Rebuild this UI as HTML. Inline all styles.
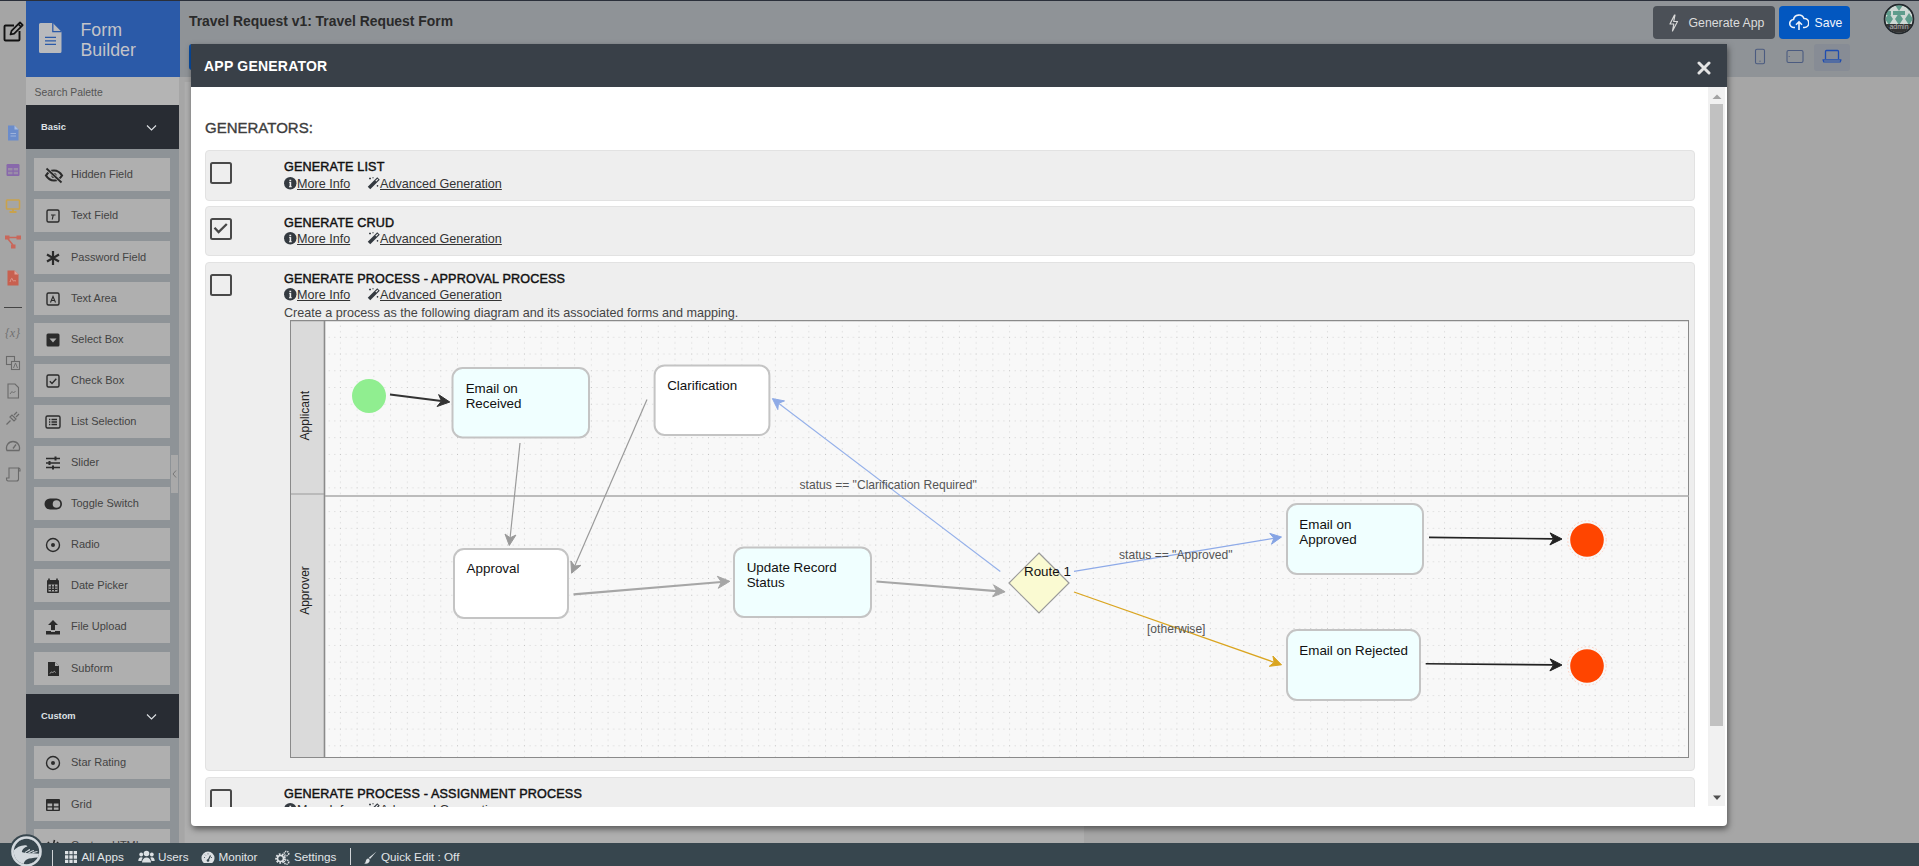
<!DOCTYPE html>
<html><head><meta charset="utf-8">
<style>
*{box-sizing:border-box;margin:0;padding:0}
html,body{width:1919px;height:866px;overflow:hidden;background:#a6a6a6;font-family:"Liberation Sans",sans-serif;position:relative}
.abs{position:absolute}
#topline{left:0;top:0;width:1919px;height:1px;background:#2a2f3a}
#iconbar{left:0;top:1px;width:26px;height:842px;background:#a5a5a5}
#brand{left:26px;top:1px;width:154px;height:76px;background:#2b5aa8}
#hdr{left:180px;top:1px;width:1739px;height:76px;background:#8f9397}
#search{left:26px;top:77px;width:153px;height:28px;background:#b4b4b4;color:#555;font-size:10.4px;padding:10px 0 0 8.5px}
#palette{left:26px;top:105px;width:153px;height:738px;background:#8e9397;overflow:hidden}
.cat{position:absolute;left:0;width:153px;height:44px;background:#282c33;color:#dfe2e6;font-size:9.3px;font-weight:bold;padding:17px 0 0 15px}
.item{position:absolute;left:8px;width:136px;height:33px;background:#afafaf;color:#434343;font-size:11px}
.item span{position:absolute;left:37px;top:10px}
.item svg{position:absolute;left:10px;top:8px}
#bottombar{left:0;top:843px;width:1919px;height:23px;background:#37464e;color:#e0e3e5;font-size:12px}
#modal{left:191px;top:44px;width:1536px;height:782px;background:#fff;border-radius:0 0 4px 4px;box-shadow:1px 3px 6px rgba(0,0,0,.5)}
#mhead{left:0;top:0;width:1536px;height:43px;background:#394048;color:#fff;font-weight:bold;font-size:14px}

#scroll{left:191px;top:87px;width:1517px;height:720px;overflow:hidden}
#inner{left:-191px;top:-87px;width:1919px;height:900px}
.t{position:absolute;white-space:nowrap;line-height:1}
.gbox{position:absolute;left:205px;width:1490px;background:#eeeeee;border:1px solid #e2e2e2;border-radius:4px}
.cb{position:absolute;left:4px;top:10.7px;width:22px;height:22px;border:2.4px solid #494949;border-radius:2.5px}
.gt{position:absolute;left:78px;top:10px;font-size:12.6px;font-weight:normal;-webkit-text-stroke:0.45px #111;color:#111;letter-spacing:0.16px;white-space:nowrap;line-height:1}
.gl{position:absolute;left:78px;top:27px;font-size:12.6px;color:#333;white-space:nowrap;line-height:1}
.gl u{text-decoration:underline}
#sbtrack{left:1708px;top:87px;width:17px;height:719px;background:#f1f1f1}
#sbthumb{left:1710px;top:104px;width:13px;height:622px;background:#c1c1c1}

.nt{font-family:"Liberation Sans",sans-serif;font-size:13.4px;fill:#111}
.el{font-family:"Liberation Sans",sans-serif;font-size:12.1px;fill:#555}
.lt{font-family:"Liberation Sans",sans-serif;font-size:12px;fill:#222}
.bt{position:absolute;top:8px;font-size:11.7px;line-height:1;color:#e2e5e8;white-space:nowrap}
#bottombar{overflow:visible}
</style></head>
<body>
<div id="topline" class="abs"></div>
<div id="iconbar" class="abs"></div>
<div id="brand" class="abs"></div>
<div id="hdr" class="abs"></div>

<svg class="abs" style="left:2px;top:21px" width="22" height="22" viewBox="0 0 22 22"><path d="M12 4.5H3.5a1 1 0 0 0-1 1v13a1 1 0 0 0 1 1h13a1 1 0 0 0 1-1V10" fill="none" stroke="#111" stroke-width="1.9"/><path d="M8.5 13.5l1-3.6L18 1.4l2.7 2.7-8.5 8.5z" fill="none" stroke="#111" stroke-width="1.7" stroke-linejoin="round"/><path d="M16.3 3.1l2.7 2.7" stroke="#111" stroke-width="1.5"/></svg>
<svg class="abs" style="left:38px;top:22px" width="25" height="32" viewBox="0 0 25 32"><path d="M2.5 1h12.3L23.5 9.7V29.5a1.5 1.5 0 0 1-1.5 1.5H2.5A1.5 1.5 0 0 1 1 29.5V2.5A1.5 1.5 0 0 1 2.5 1z" fill="#b9babd"/><path d="M14.8 1V9.7H23.5" fill="none" stroke="#2b5aa8" stroke-width="1.3"/><path d="M7 15.4h11M7 18.8h11M7 22.3h11" stroke="#2b5aa8" stroke-width="1.2"/></svg>
<div class="t" style="left:80.5px;top:19.5px;font-size:17.8px;color:#c3c4c9;line-height:20.6px">Form<br>Builder</div>
<div class="t" style="left:189px;top:15px;font-size:13.9px;font-weight:bold;color:#2a2a2a">Travel Request v1: Travel Request Form</div>
<div class="abs" style="left:189px;top:44px;width:10px;height:26px;background:#0a4fa8;border-radius:3px"></div>
<div class="abs" style="left:1653px;top:6px;width:122px;height:33px;background:#4b5057;border-radius:4px;color:#dcdcdc;font-size:13.3px">
 <svg style="position:absolute;left:15px;top:8px" width="11" height="18" viewBox="0 0 11 18"><path d="M6.5 1L2 10h3.8L4.5 17L9.5 7.5H5.7L7 1z" fill="none" stroke="#d8d8d8" stroke-width="1.2" stroke-linejoin="round"/></svg>
 <span style="position:absolute;left:35.5px;top:11px;line-height:1;font-size:12.3px">Generate App</span></div>
<div class="abs" style="left:1779px;top:6px;width:71px;height:33px;background:#0257c0;border-radius:4px;color:#f2f5fa;font-size:13.3px">
 <svg style="position:absolute;left:10px;top:8px" width="20" height="17" viewBox="0 0 20 17"><path d="M6 13.5H5A4 4 0 0 1 4.5 5.5A5.5 5.5 0 0 1 15 4.5A4.5 4.5 0 0 1 15.5 13.5H14" fill="none" stroke="#eef2f8" stroke-width="1.6"/><path d="M10 16V8M7 10.8L10 7.8L13 10.8" fill="none" stroke="#eef2f8" stroke-width="1.6"/></svg>
 <span style="position:absolute;left:35.5px;top:11px;line-height:1;font-size:12.2px">Save</span></div>
<div class="abs" style="left:1814px;top:44px;width:36px;height:27px;background:#878c95;border-radius:3px"></div>
<svg class="abs" style="left:1754px;top:48px" width="12" height="17" viewBox="0 0 12 17"><rect x="1.5" y="1.2" width="9" height="14.5" rx="1.5" fill="none" stroke="#4b5b80" stroke-width="1.1"/><circle cx="6" cy="13.2" r="0.6" fill="#4b5b80"/></svg>
<svg class="abs" style="left:1786px;top:49px" width="19" height="15" viewBox="0 0 19 15"><rect x="1" y="1.5" width="16" height="12" rx="1.5" fill="none" stroke="#4b5b80" stroke-width="1.1"/><circle cx="3.2" cy="7.5" r="0.6" fill="#4b5b80"/></svg>
<svg class="abs" style="left:1822px;top:49px" width="20" height="15" viewBox="0 0 20 15"><path d="M3.5 10V2.5a1 1 0 0 1 1-1h11a1 1 0 0 1 1 1V10" fill="none" stroke="#1f4db0" stroke-width="1.3"/><path d="M1 10.8h18l-0.8 2.2H1.8z" fill="none" stroke="#1f4db0" stroke-width="1.2" stroke-linejoin="round"/></svg>
<svg class="abs" style="left:1883px;top:3px" width="32" height="32" viewBox="0 0 32 32"><defs><clipPath id="av"><circle cx="16" cy="16" r="13.8"/></clipPath></defs><circle cx="16" cy="16" r="15" fill="#2a2f33"/><g clip-path="url(#av)"><rect x="0" y="0" width="32" height="32" fill="#cfd8d4"/><path d="M2 2h8l-4 6zM12 2h8l-4 6zM22 2h8l-4 6zM6 10l4 6l-4 6l-4-6zM16 10l4 6l-4 6l-4-6zM26 10l4 6l-4 6l-4-6zM2 8h6v4H2zM10 8h12v4H10z" fill="#5f9c8c"/><rect x="0" y="21" width="32" height="11" fill="#333"/></g><text x="16" y="26" font-size="7" fill="#bbb" text-anchor="middle" font-family="Liberation Sans">admin</text><circle cx="16" cy="16" r="14.5" fill="none" stroke="#23282c" stroke-width="1.6"/></svg>

<svg class="abs" style="left:5px;top:125px" width="16" height="16" viewBox="0 0 16 16"><path d="M3 0.5h6.5L13.5 4.5V15.5H3z" fill="#6b8ccb"/><path d="M9.5 0.5v4h4" fill="#a9bde0"/><path d="M5.5 8.5h5.5M5.5 11h5.5" stroke="#9eb3dc" stroke-width="1"/></svg>
<svg class="abs" style="left:5px;top:163px" width="16" height="14" viewBox="0 0 16 14"><rect x="1.5" y="1" width="13" height="12" rx="1.2" fill="#8868ab"/><path d="M3 5h4.5v2.5H3zM8.7 5h4.3v2.5H8.7zM3 8.8h4.5v2.5H3zM8.7 8.8h4.3v2.5H8.7z" fill="#a6a6a6" opacity=".6"/></svg>
<svg class="abs" style="left:5px;top:198px" width="16" height="16" viewBox="0 0 16 16"><rect x="1.5" y="2" width="13" height="9" rx="0.8" fill="none" stroke="#c9a24c" stroke-width="1.6"/><path d="M8 11v2.5M4.5 14h7" stroke="#c9a24c" stroke-width="1.8"/></svg>
<svg class="abs" style="left:4px;top:234px" width="18" height="16" viewBox="0 0 18 16"><rect x="1" y="1.5" width="4.5" height="4" fill="#c9675a"/><rect x="12.5" y="1.5" width="4.5" height="4" fill="#c9675a"/><rect x="7" y="10.5" width="4.5" height="4" fill="#c9675a"/><path d="M5 3.5h8M4 5l5 6" stroke="#c9675a" stroke-width="1.5"/></svg>
<svg class="abs" style="left:5px;top:270px" width="16" height="16" viewBox="0 0 16 16"><path d="M2.5 0.5h7L13.5 4.5V15.5H2.5z" fill="#c8604f"/><path d="M9.5 0.5v4h4" fill="#e0a49a"/><path d="M5 12c1-3 2-5 2.5-2.5S9 10 11 11" stroke="#e0a49a" stroke-width="0.9" fill="none"/></svg>
<div class="abs" style="left:4px;top:307px;width:18px;height:1.2px;background:#444"></div>
<div class="t" style="left:5px;top:327px;font-size:12px;font-style:italic;color:#707070;font-family:'Liberation Serif',serif">{x}</div>
<svg class="abs" style="left:5px;top:355px" width="16" height="16" viewBox="0 0 16 16"><rect x="1.5" y="1.5" width="8" height="8" fill="none" stroke="#6a6a6a" stroke-width="1.1"/><rect x="6.5" y="6.5" width="8" height="8" fill="#a6a6a6" stroke="#6a6a6a" stroke-width="1.1"/><path d="M8.5 13l2-5l2 5" stroke="#6a6a6a" stroke-width="0.9" fill="none"/></svg>
<svg class="abs" style="left:5px;top:383px" width="16" height="16" viewBox="0 0 16 16"><path d="M3 1h7l3.5 3.5V15H3z" fill="none" stroke="#6a6a6a" stroke-width="1.1"/><path d="M5 11l2-2.5l1.5 1.5l2-2" stroke="#6a6a6a" stroke-width="0.9" fill="none"/></svg>
<svg class="abs" style="left:5px;top:410px" width="16" height="16" viewBox="0 0 16 16"><path d="M1.5 14.5l4-4M5 7l4 4l2-2l-4-4zM9 5l3-3M11 7l3-3" stroke="#6a6a6a" stroke-width="1.2" fill="none"/></svg>
<svg class="abs" style="left:5px;top:438px" width="16" height="16" viewBox="0 0 16 16"><path d="M2 12.5a6.5 6.5 0 1 1 12 0z" fill="none" stroke="#6a6a6a" stroke-width="1.3"/><path d="M8 10.5l3-4" stroke="#6a6a6a" stroke-width="1.3"/></svg>
<svg class="abs" style="left:5px;top:466px" width="16" height="16" viewBox="0 0 16 16"><path d="M4 2h9.5v11a2 2 0 0 1-2 2H3a2 2 0 0 1-1.5-2V12H4z" fill="none" stroke="#6a6a6a" stroke-width="1.1"/><path d="M13.5 2a1.5 1.5 0 0 1 1.5 1.5V5h-1.5" fill="none" stroke="#6a6a6a" stroke-width="1.1"/></svg>
<div class="abs" style="left:179px;top:77px;width:5px;height:766px;background:#a6a6a6"></div>
<div class="abs" style="left:184px;top:82px;width:900px;height:761px;background:#afafaf;border-left:1px solid #a9a9a9"></div>
<div id="search" class="abs">Search Palette</div>
<div id="palette" class="abs"><div class="cat" style="top:0px">Basic<svg style="position:absolute;left:120px;top:19px" width="11" height="8" viewBox="0 0 11 8"><path d="M1 1.5L5.5 6L10 1.5" stroke="#dfe2e6" stroke-width="1.1" fill="none"/></svg></div>
<div class="item" style="top:53.3px"><svg width="20" height="18" viewBox="0 0 20 18"><path d="M2 9.5C4.5 5.5 7 4.5 10 4.5S15.5 5.5 18 9.5C15.5 13.5 13 14.5 10 14.5S4.5 13.5 2 9.5Z" fill="none" stroke="#2b2b2b" stroke-width="2.2"/><circle cx="10" cy="9.5" r="2.6" fill="#2b2b2b"/><path d="M2.5 2.5L17.5 16.5" stroke="#afafaf" stroke-width="3.5"/><path d="M2.5 2.5L17.5 16.5" stroke="#2b2b2b" stroke-width="1.8"/></svg><span>Hidden Field</span></div>
<div class="item" style="top:94.4px"><svg width="18" height="18" viewBox="0 0 18 18"><rect x="3" y="3" width="12" height="12" rx="1.5" fill="none" stroke="#2b2b2b" stroke-width="1.4"/><path d="M7 8h4.5M9.2 8l-0.9 4.5" stroke="#2b2b2b" stroke-width="1.2"/></svg><span>Text Field</span></div>
<div class="item" style="top:135.5px"><svg width="18" height="18" viewBox="0 0 18 18"><path d="M9 2v14M3 5.5l12 7M15 5.5l-12 7" stroke="#2b2b2b" stroke-width="2.2"/></svg><span>Password Field</span></div>
<div class="item" style="top:176.6px"><svg width="18" height="18" viewBox="0 0 18 18"><rect x="3" y="3" width="12" height="12" rx="1.5" fill="none" stroke="#2b2b2b" stroke-width="1.4"/><path d="M6.5 12.5L9 6.5L11.5 12.5M7.5 10.5h3" stroke="#2b2b2b" stroke-width="1.1" fill="none"/></svg><span>Text Area</span></div>
<div class="item" style="top:217.7px"><svg width="18" height="18" viewBox="0 0 18 18"><rect x="2.5" y="2.5" width="13" height="13" rx="1.5" fill="#2b2b2b"/><path d="M5.5 7.5h7L9 11.5Z" fill="#afafaf"/></svg><span>Select Box</span></div>
<div class="item" style="top:258.8px"><svg width="18" height="18" viewBox="0 0 18 18"><rect x="3" y="3" width="12" height="12" rx="1.5" fill="none" stroke="#2b2b2b" stroke-width="1.4"/><path d="M5.8 9.2l2.2 2.3l4.3-4.8" stroke="#2b2b2b" stroke-width="1.4" fill="none"/></svg><span>Check Box</span></div>
<div class="item" style="top:299.9px"><svg width="18" height="18" viewBox="0 0 18 18"><rect x="2" y="3" width="14" height="12" rx="1.5" fill="none" stroke="#2b2b2b" stroke-width="1.4"/><path d="M5 6.5h1.3M5 9h1.3M5 11.5h1.3M7.5 6.5h5.5M7.5 9h5.5M7.5 11.5h5.5" stroke="#2b2b2b" stroke-width="1.3"/></svg><span>List Selection</span></div>
<div class="item" style="top:341.0px"><svg width="18" height="18" viewBox="0 0 18 18"><path d="M2 4.5h14M2 9h14M2 13.5h14" stroke="#2b2b2b" stroke-width="1.6"/><path d="M11.5 2.5v4M5.5 7v4M9 11.5v4" stroke="#2b2b2b" stroke-width="2"/></svg><span>Slider</span></div>
<div class="item" style="top:382.1px"><svg width="20" height="18" viewBox="0 0 20 18"><rect x="0.5" y="3.5" width="17.5" height="11" rx="5.5" fill="#2b2b2b"/><circle cx="12.5" cy="9" r="3.8" fill="#afafaf"/></svg><span>Toggle Switch</span></div>
<div class="item" style="top:423.2px"><svg width="18" height="18" viewBox="0 0 18 18"><circle cx="9" cy="9" r="6.5" fill="none" stroke="#2b2b2b" stroke-width="1.4"/><circle cx="9" cy="9" r="2" fill="#2b2b2b"/></svg><span>Radio</span></div>
<div class="item" style="top:464.3px"><svg width="18" height="18" viewBox="0 0 18 18"><path d="M5 1.5v3M13 1.5v3" stroke="#2b2b2b" stroke-width="1.6"/><rect x="3" y="3" width="12" height="13" rx="1" fill="#2b2b2b"/><path d="M4.5 7.5h9v7h-9z" fill="#afafaf"/><path d="M4.5 10h9M4.5 12.4h9M7.5 7.5v7M10.5 7.5v7" stroke="#2b2b2b" stroke-width="1.1"/></svg><span>Date Picker</span></div>
<div class="item" style="top:505.4px"><svg width="18" height="18" viewBox="0 0 18 18"><path d="M9 2L4 7h3v5h4V7h3Z" fill="#2b2b2b"/><path d="M2 13h5v1h4v-1h5v3.5H2z" fill="#2b2b2b"/></svg><span>File Upload</span></div>
<div class="item" style="top:546.5px"><svg width="18" height="18" viewBox="0 0 18 18"><path d="M4 2h7l4 4v10H4z" fill="#2b2b2b"/><path d="M6 13.5c1.5-3 2.5 0 3.5-1.5s1.5 0 2 0.5" stroke="#afafaf" stroke-width="1" fill="none"/><path d="M11 2v4h4" fill="#afafaf"/></svg><span>Subform</span></div>
<div class="cat" style="top:589px">Custom<svg style="position:absolute;left:120px;top:19px" width="11" height="8" viewBox="0 0 11 8"><path d="M1 1.5L5.5 6L10 1.5" stroke="#dfe2e6" stroke-width="1.1" fill="none"/></svg></div>
<div class="item" style="top:641.4px"><svg width="18" height="18" viewBox="0 0 18 18"><circle cx="9" cy="9" r="6.5" fill="none" stroke="#2b2b2b" stroke-width="1.4"/><circle cx="9" cy="9" r="2" fill="#2b2b2b"/></svg><span>Star Rating</span></div>
<div class="item" style="top:682.5px"><svg width="18" height="18" viewBox="0 0 18 18"><rect x="2" y="3" width="14" height="12" rx="1" fill="#2b2b2b"/><path d="M3.5 7.5h4.7v2.7H3.5zM9.8 7.5h4.7v2.7H9.8zM3.5 11.5h4.7v2.2H3.5zM9.8 11.5h4.7v2.2H9.8z" fill="#afafaf"/></svg><span>Grid</span></div>
<div class="item" style="top:723.6px"><svg width="18" height="18" viewBox="0 0 18 18"><path d="M5 5L1.5 9L5 13M13 5l3.5 4L13 13M10.5 3l-3 12" stroke="#2b2b2b" stroke-width="1.6" fill="none"/></svg><span>Custom HTML</span></div>
<div style="position:absolute;left:145px;top:350px;width:7px;height:38px;background:#a9a9a9"><svg style="position:absolute;left:0;top:14px" width="7" height="10" viewBox="0 0 7 10"><path d="M5 1.5L2 5L5 8.5" stroke="#777" stroke-width="1" fill="none"/></svg></div></div>

<div id="bottombar" class="abs">
 <svg class="abs" style="left:9px;top:-9px" width="35" height="35" viewBox="0 0 35 35"><defs><clipPath id="lg"><circle cx="17.5" cy="17.5" r="12.8"/></clipPath></defs><circle cx="17.5" cy="17.5" r="17.3" fill="#37464e"/><g clip-path="url(#lg)"><rect x="0" y="0" width="35" height="35" fill="#d3d9de"/><path d="M2 19.5C5.5 14.5 10.5 11.2 15.8 11.2C17.3 11.2 18.6 11.8 18.3 12.4C15.5 13.2 13.3 15.2 12.8 17.8C13.5 19 20 19.5 33 19.8L33 0L2 0Z" fill="#37464e"/><path d="M14.8 36C13.8 30 15 25.8 20 24.6C24 23.7 28 23.5 33 23.4L33 36Z" fill="#37464e"/><path d="M16 18.6C18 17.5 19.5 16 21 15.6M19.5 18.8C21.5 17.8 23 16.8 25 16.5M23.5 18.9C25.5 18.3 27 17.6 28.5 17.5" stroke="#d3d9de" stroke-width="1.1" fill="none"/></g><circle cx="17.5" cy="17.5" r="14" fill="none" stroke="#d3d9de" stroke-width="2.6"/></svg>
 <div class="abs" style="left:52px;top:7px;width:1.2px;height:16px;background:#d0d4d7"></div>
 <svg class="abs" style="left:65px;top:7.5px" width="12" height="12" viewBox="0 0 12 12"><path d="M0 0h3.3v3.3H0zM4.35 0h3.3v3.3h-3.3zM8.7 0H12v3.3H8.7zM0 4.35h3.3v3.3H0zM4.35 4.35h3.3v3.3h-3.3zM8.7 4.35H12v3.3H8.7zM0 8.7h3.3V12H0zM4.35 8.7h3.3V12h-3.3zM8.7 8.7H12V12H8.7z" fill="#dde1e4"/></svg>
 <span class="bt" style="left:81.5px">All Apps</span>
 <svg class="abs" style="left:138px;top:7px" width="17" height="13" viewBox="0 0 17 13"><circle cx="8.5" cy="3.5" r="2.8" fill="#dde1e4"/><circle cx="3.2" cy="4.5" r="1.9" fill="#dde1e4"/><circle cx="13.8" cy="4.5" r="1.9" fill="#dde1e4"/><path d="M4 12.5c0-3 2-5 4.5-5s4.5 2 4.5 5z" fill="#dde1e4"/><path d="M0.3 11c0-2.5 1-3.8 2.9-3.8c0.8 0 1.3 0.3 1.6 0.6c-0.8 0.8-1.2 2-1.3 3.2zM16.7 11c0-2.5-1-3.8-2.9-3.8c-0.8 0-1.3 0.3-1.6 0.6c0.8 0.8 1.2 2 1.3 3.2z" fill="#dde1e4"/></svg>
 <span class="bt" style="left:158px">Users</span>
 <svg class="abs" style="left:200.5px;top:7.5px" width="14" height="13" viewBox="0 0 14 13"><path d="M7 0.5a6.5 6.5 0 0 0-6.5 6.5c0 2 0.9 3.8 2.3 5h8.4c1.4-1.2 2.3-3 2.3-5A6.5 6.5 0 0 0 7 0.5z" fill="#dde1e4"/><path d="M7 9.5l2.5-5" stroke="#37464e" stroke-width="1.3"/><circle cx="7" cy="9.5" r="1.3" fill="#37464e"/><path d="M3 6.5h0.8M10.2 6.5h0.8M7 2.5v0.8M4.2 3.8l0.5 0.5" stroke="#37464e" stroke-width="1"/></svg>
 <span class="bt" style="left:218.5px">Monitor</span>
 <svg class="abs" style="left:275px;top:6.5px" width="15" height="15" viewBox="0 0 15 15"><circle cx="5.5" cy="8.5" r="4" fill="none" stroke="#dde1e4" stroke-width="2.6" stroke-dasharray="1.6 1.2"/><circle cx="5.5" cy="8.5" r="3" fill="none" stroke="#dde1e4" stroke-width="1.6"/><circle cx="11.5" cy="3.5" r="2.2" fill="none" stroke="#dde1e4" stroke-width="1.6" stroke-dasharray="1.2 0.8"/><circle cx="11.5" cy="12" r="2.2" fill="none" stroke="#dde1e4" stroke-width="1.6" stroke-dasharray="1.2 0.8"/></svg>
 <span class="bt" style="left:294px">Settings</span>
 <div class="abs" style="left:350px;top:5px;width:1.2px;height:17px;background:#d0d4d7"></div>
 <svg class="abs" style="left:364px;top:7.5px" width="13" height="13" viewBox="0 0 13 13"><path d="M12.5 0.5L6 8l-1.2-1.2z" fill="#dde1e4"/><path d="M4.5 7.5c-2 0-2.5 1.5-2.8 3c-0.2 1-0.7 1.5-1.5 2c2.5 0.5 5.5 0 5.5-3.5z" fill="#dde1e4"/></svg>
 <span class="bt" style="left:381px">Quick Edit : Off</span>
</div>

<div id="modal" class="abs">
  <div id="mhead" class="abs"><span style="position:absolute;left:13px;top:14px;font-size:14px;letter-spacing:0.22px">APP GENERATOR</span>
    <svg class="abs" style="left:1506px;top:17px" width="14" height="14" viewBox="0 0 14 14"><path d="M2 2L12 12M12 2L2 12" stroke="#e4e4e4" stroke-width="3" stroke-linecap="round"/></svg>
  </div>
</div>
<div id="scroll" class="abs">
 <div id="inner" class="abs">
  <div class="t" style="left:205px;top:120.3px;font-size:15px;color:#3d3d3d;-webkit-text-stroke:0.35px #3d3d3d">GENERATORS:</div>
  
  <div class="gbox" style="top:150px;height:51px"><div class="cb"></div><div class="gt">GENERATE LIST</div><div class="gl" style="top:26.5px"><svg style="position:absolute;left:0;top:-1px" width="13" height="13" viewBox="0 0 13 13"><circle cx="6.25" cy="6.25" r="6.2" fill="#343a40"/><path d="M5.4 2.8h1.8v1.4H5.4zM5.2 5h2v4.2h0.6v1h-2.8v-1h0.6V6H5.2z" fill="#eee"/></svg><u style="position:absolute;left:13px;top:0">More Info</u><svg style="position:absolute;left:83px;top:-2px" width="14" height="14" viewBox="0 0 14 14"><path d="M2 12L11.5 2.5" stroke="#343a40" stroke-width="3.6"/><path d="M8.8 5.2L10.8 3.2" stroke="#eee" stroke-width="1.2"/><path d="M3 1.5v2M2 2.5h2M6 1v1.4M10.5 9v1.6M9.7 9.8h1.6" stroke="#343a40" stroke-width="0.9"/></svg><u style="position:absolute;left:96px;top:0">Advanced Generation</u></div></div>
  <div class="gbox" style="top:206px;height:50px"><div class="cb"><svg style="position:absolute;left:1px;top:2px" width="16" height="14" viewBox="0 0 16 14"><path d="M1.5 5.8L5.6 10L13.8 2" stroke="#484848" stroke-width="2.3" fill="none"/></svg></div><div class="gt">GENERATE CRUD</div><div class="gl" style="top:25.5px"><svg style="position:absolute;left:0;top:-1px" width="13" height="13" viewBox="0 0 13 13"><circle cx="6.25" cy="6.25" r="6.2" fill="#343a40"/><path d="M5.4 2.8h1.8v1.4H5.4zM5.2 5h2v4.2h0.6v1h-2.8v-1h0.6V6H5.2z" fill="#eee"/></svg><u style="position:absolute;left:13px;top:0">More Info</u><svg style="position:absolute;left:83px;top:-2px" width="14" height="14" viewBox="0 0 14 14"><path d="M2 12L11.5 2.5" stroke="#343a40" stroke-width="3.6"/><path d="M8.8 5.2L10.8 3.2" stroke="#eee" stroke-width="1.2"/><path d="M3 1.5v2M2 2.5h2M6 1v1.4M10.5 9v1.6M9.7 9.8h1.6" stroke="#343a40" stroke-width="0.9"/></svg><u style="position:absolute;left:96px;top:0">Advanced Generation</u></div></div>
  <div class="gbox" style="top:262px;height:509px"><div class="cb"></div><div class="gt">GENERATE PROCESS - APPROVAL PROCESS</div><div class="gl" style="top:25.5px"><svg style="position:absolute;left:0;top:-1px" width="13" height="13" viewBox="0 0 13 13"><circle cx="6.25" cy="6.25" r="6.2" fill="#343a40"/><path d="M5.4 2.8h1.8v1.4H5.4zM5.2 5h2v4.2h0.6v1h-2.8v-1h0.6V6H5.2z" fill="#eee"/></svg><u style="position:absolute;left:13px;top:0">More Info</u><svg style="position:absolute;left:83px;top:-2px" width="14" height="14" viewBox="0 0 14 14"><path d="M2 12L11.5 2.5" stroke="#343a40" stroke-width="3.6"/><path d="M8.8 5.2L10.8 3.2" stroke="#eee" stroke-width="1.2"/><path d="M3 1.5v2M2 2.5h2M6 1v1.4M10.5 9v1.6M9.7 9.8h1.6" stroke="#343a40" stroke-width="0.9"/></svg><u style="position:absolute;left:96px;top:0">Advanced Generation</u></div>
    <div class="gl" style="top:44px;color:#444">Create a process as the following diagram and its associated forms and mapping.</div>
  </div>
<svg class="abs" style="left:290px;top:320px" width="1400" height="440" viewBox="290 320 1400 440">
<defs><pattern id="grid1" x="339.9" y="336.8" width="16.73" height="16.73" patternUnits="userSpaceOnUse"><rect x="0" y="0" width="1" height="1" fill="#bdbdbd"/><rect x="5.58" y="0" width="1" height="1" fill="#d4d4d4"/><rect x="11.15" y="0" width="1" height="1" fill="#d4d4d4"/><rect x="0" y="5.58" width="1" height="1" fill="#d4d4d4"/><rect x="0" y="11.15" width="1" height="1" fill="#d4d4d4"/></pattern><pattern id="grid2" x="339.9" y="511.1" width="16.73" height="16.73" patternUnits="userSpaceOnUse"><rect x="0" y="0" width="1" height="1" fill="#bdbdbd"/><rect x="5.58" y="0" width="1" height="1" fill="#d4d4d4"/><rect x="11.15" y="0" width="1" height="1" fill="#d4d4d4"/><rect x="0" y="5.58" width="1" height="1" fill="#d4d4d4"/><rect x="0" y="11.15" width="1" height="1" fill="#d4d4d4"/></pattern></defs>
<rect x="290.5" y="320.5" width="1398" height="437" fill="#f8f8f8" stroke="#8a8a8a" stroke-width="1"/>
<rect x="325" y="321" width="1363" height="174" fill="url(#grid1)"/><rect x="325" y="497" width="1363" height="260" fill="url(#grid2)"/>
<rect x="291" y="321" width="33" height="436" fill="#dadada"/>
<path d="M324.5 320V757" stroke="#8a8a8a" stroke-width="1.6"/>
<path d="M290 320.6H1689" stroke="#8a8a8a" stroke-width="1.4"/>
<path d="M291 494H324" stroke="#9a9a9a" stroke-width="1.2"/>
<path d="M325 496H1689" stroke="#a8a8a8" stroke-width="1.6"/>
<text class="lt" transform="translate(308.5 415.7) rotate(-90)" text-anchor="middle">Applicant</text>
<text class="lt" transform="translate(308.5 590.5) rotate(-90)" text-anchor="middle">Approver</text>
<path d="M390.0 394.5L441.5 401.0" stroke="#333" stroke-width="2.2" fill="none"/><path d="M449.8 402.0L437.1 406.5L441.5 401.0L438.6 394.6Z" fill="#333" stroke="#333" stroke-width="1" stroke-linejoin="round"/>
<path d="M520.0 443.0L510.1 537.8" stroke="#9a9a9a" stroke-width="1.2" fill="none"/><path d="M509.3 545.5L505.0 534.0L510.1 537.8L515.9 535.1Z" fill="#9a9a9a" stroke="#9a9a9a" stroke-width="1" stroke-linejoin="round"/>
<path d="M647.0 399.4L574.7 566.1" stroke="#9a9a9a" stroke-width="1.2" fill="none"/><path d="M571.6 573.2L570.9 560.9L574.7 566.1L581.0 565.3Z" fill="#9a9a9a" stroke="#9a9a9a" stroke-width="1" stroke-linejoin="round"/>
<path d="M573.5 594.4L721.4 582.0" stroke="#a6a6a6" stroke-width="2.2" fill="none"/><path d="M729.8 581.3L718.3 588.3L721.4 582.0L717.3 576.3Z" fill="#a6a6a6" stroke="#a6a6a6" stroke-width="1" stroke-linejoin="round"/>
<path d="M876.4 581.5L996.7 591.1" stroke="#a6a6a6" stroke-width="2.2" fill="none"/><path d="M1005.1 591.8L992.7 596.8L996.7 591.1L993.6 584.9Z" fill="#a6a6a6" stroke="#a6a6a6" stroke-width="1" stroke-linejoin="round"/>
<path d="M1000.3 571.5L778.5 403.3" stroke="#94b0ea" stroke-width="1.1" fill="none"/><path d="M772.4 398.6L784.5 400.9L778.5 403.3L777.8 409.6Z" fill="#8eaae6" stroke="#8eaae6" stroke-width="1" stroke-linejoin="round"/>
<path d="M1074.0 571.3L1273.9 538.3" stroke="#8eaae8" stroke-width="1.3" fill="none"/><path d="M1281.5 537.0L1271.5 544.2L1273.9 538.3L1269.8 533.4Z" fill="#86a4e4" stroke="#86a4e4" stroke-width="1" stroke-linejoin="round"/>
<path d="M1074.0 592.0L1274.2 662.3" stroke="#daa520" stroke-width="1.3" fill="none"/><path d="M1281.5 664.8L1269.3 666.3L1274.2 662.3L1272.9 656.0Z" fill="#daa520" stroke="#daa520" stroke-width="1" stroke-linejoin="round"/>
<path d="M1429.0 537.4L1553.6 538.9" stroke="#222" stroke-width="1.6" fill="none"/><path d="M1562.0 539.0L1549.9 544.9L1553.6 538.9L1550.1 532.9Z" fill="#222" stroke="#222" stroke-width="1" stroke-linejoin="round"/>
<path d="M1425.7 663.8L1553.6 664.9" stroke="#222" stroke-width="1.6" fill="none"/><path d="M1562.0 665.0L1549.9 670.9L1553.6 664.9L1550.1 658.9Z" fill="#222" stroke="#222" stroke-width="1" stroke-linejoin="round"/>
<circle cx="369" cy="396" r="17" fill="#90ee90"/>
<circle cx="1587" cy="540" r="19.2" fill="none" stroke="#ffc9b8" stroke-width="0.9" stroke-dasharray="1.6 2.2"/><circle cx="1587" cy="540" r="16.8" fill="#ff4500"/>
<circle cx="1587" cy="666" r="19.2" fill="none" stroke="#ffc9b8" stroke-width="0.9" stroke-dasharray="1.6 2.2"/><circle cx="1587" cy="666" r="16.8" fill="#ff4500"/>
<rect x="452.5" y="368" width="136.5" height="69.5" rx="10" ry="10" fill="#f0ffff" stroke="#c4c4c4" stroke-width="2"/><text x="465.7" y="392.5" class="nt">Email on</text><text x="465.7" y="407.8" class="nt">Received</text>
<rect x="654.6" y="365.4" width="114.79999999999995" height="69.60000000000002" rx="10" ry="10" fill="#ffffff" stroke="#c4c4c4" stroke-width="2"/><text x="667.2" y="390.2" class="nt">Clarification</text>
<rect x="454" y="549" width="114" height="69" rx="10" ry="10" fill="#ffffff" stroke="#c4c4c4" stroke-width="2"/><text x="466.6" y="573.2" class="nt">Approval</text>
<rect x="734" y="547.4" width="137" height="69.60000000000002" rx="10" ry="10" fill="#f0ffff" stroke="#c4c4c4" stroke-width="2"/><text x="746.7" y="572.0" class="nt">Update Record</text><text x="746.7" y="587.3" class="nt">Status</text>
<rect x="1287" y="504" width="136" height="70" rx="10" ry="10" fill="#f0ffff" stroke="#c4c4c4" stroke-width="2"/><text x="1299.3" y="528.6" class="nt">Email on</text><text x="1299.3" y="543.9" class="nt">Approved</text>
<rect x="1287" y="630" width="133" height="70" rx="10" ry="10" fill="#f0ffff" stroke="#c4c4c4" stroke-width="2"/><text x="1299.3" y="655.1" class="nt">Email on Rejected</text>
<path d="M1039 553L1069 583L1039 613L1009 583Z" fill="#fafad2" stroke="#9a9a9a" stroke-width="1.2"/>
<text x="1024" y="575.5" class="nt">Route 1</text>
<text x="799.5" y="489" class="el">status == "Clarification Required"</text>
<text x="1119" y="558.6" class="el">status == "Approved"</text>
<text x="1147" y="632.7" class="el">[otherwise]</text>
</svg>
  <div class="gbox" style="top:777px;height:80px"><div class="cb"></div><div class="gt">GENERATE PROCESS - ASSIGNMENT PROCESS</div><div class="gl" style="top:25.5px"><svg style="position:absolute;left:0;top:-1px" width="13" height="13" viewBox="0 0 13 13"><circle cx="6.25" cy="6.25" r="6.2" fill="#343a40"/><path d="M5.4 2.8h1.8v1.4H5.4zM5.2 5h2v4.2h0.6v1h-2.8v-1h0.6V6H5.2z" fill="#eee"/></svg><u style="position:absolute;left:13px;top:0">More Info</u><svg style="position:absolute;left:83px;top:-2px" width="14" height="14" viewBox="0 0 14 14"><path d="M2 12L11.5 2.5" stroke="#343a40" stroke-width="3.6"/><path d="M8.8 5.2L10.8 3.2" stroke="#eee" stroke-width="1.2"/><path d="M3 1.5v2M2 2.5h2M6 1v1.4M10.5 9v1.6M9.7 9.8h1.6" stroke="#343a40" stroke-width="0.9"/></svg><u style="position:absolute;left:96px;top:0">Advanced Generation</u></div></div>

 </div>
</div>
<div id="sbtrack" class="abs"></div>
<div id="sbthumb" class="abs"></div>
<svg class="abs" style="left:1711px;top:92px" width="12" height="8"><path d="M1.5 7L6 2.5L10.5 7Z" fill="#a3a3a3"/></svg>
<svg class="abs" style="left:1711px;top:794px" width="12" height="8"><path d="M2 1.5L6 6L10 1.5Z" fill="#505050"/></svg>
</body></html>
